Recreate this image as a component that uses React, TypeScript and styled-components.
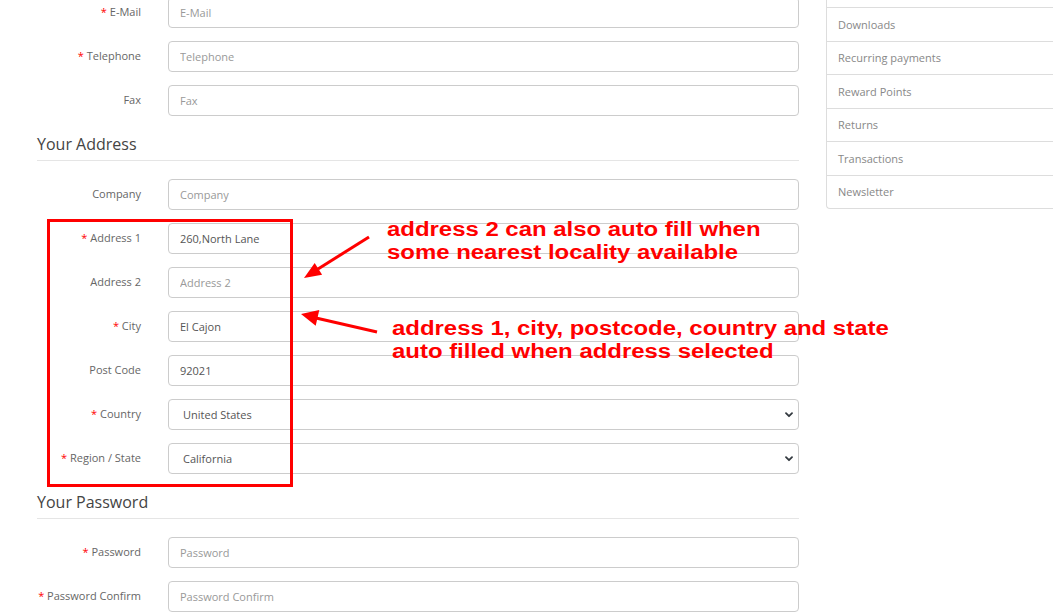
import React from "react";
import styled, { createGlobalStyle } from "styled-components";

const GlobalStyle = createGlobalStyle`
  html, body {
    margin: 0;
    padding: 0;
    overflow: hidden;
    background: #fff;
  }
  body {
    font-family: "Open Sans", "Noto Sans", sans-serif;
    color: #666;
  }
  * { box-sizing: border-box; }
`;

const Page = styled.div`
  position: relative;
  display: flex;
  align-items: flex-start;
  gap: 27px;
  padding-left: 37px;
  width: 1053px;
  height: 613px;
  overflow: hidden;
`;

const Main = styled.div`
  flex: 0 0 762px;
  margin-top: -3px;
`;

const Legend = styled.div`
  font-size: 16px;
  line-height: 24px;
  color: #444;
  padding: 3px 0 4px;
  border-bottom: 1px solid #e5e5e5;
  margin-bottom: 18px;
`;

const Row = styled.div`
  display: grid;
  grid-template-columns: 104px 1fr;
  column-gap: 27px;
  align-items: center;
  margin-bottom: 13px;
`;

const Label = styled.label<{ $required?: boolean }>`
  text-align: right;
  font-size: 11px;
  line-height: 16px;
  padding-bottom: 2px;
  color: #666;
  white-space: nowrap;
  &::before {
    content: ${(p) => (p.$required ? '"* "' : '""')};
    color: #f00;
  }
`;

const Input = styled.input`
  display: block;
  width: 100%;
  height: 31px;
  border: 1px solid #ccc;
  border-radius: 4px;
  padding: 0 11px;
  font-family: "Open Sans", "Noto Sans", sans-serif;
  font-size: 11px;
  color: #555;
  background: #fff;
  outline: none;
  &::placeholder {
    color: #999;
  }
`;

const SelectWrap = styled.div`
  position: relative;
`;

const Select = styled.select`
  display: block;
  width: 100%;
  height: 31px;
  border: 1px solid #ccc;
  border-radius: 4px;
  padding: 0 14px;
  font-family: "Open Sans", "Noto Sans", sans-serif;
  font-size: 11px;
  color: #555;
  background: #fff;
  appearance: none;
  -webkit-appearance: none;
  outline: none;
`;

const Chevron = styled.svg`
  position: absolute;
  right: 6px;
  top: 50%;
  margin-top: -3px;
  width: 8px;
  height: 6px;
  pointer-events: none;
`;

const Aside = styled.aside`
  flex: 0 0 240px;
`;

const List = styled.div`
  padding-top: 7px;
  border-left: 1px solid #ddd;
  border-bottom: 1px solid #ddd;
  border-bottom-left-radius: 4px;
`;

const Item = styled.div`
  display: flex;
  align-items: center;
  height: 33.5px;
  padding-left: 11px;
  border-top: 1px solid #ddd;
  font-size: 11px;
  color: #888;
`;

const Overlay = styled.div`
  position: absolute;
  inset: 0;
  pointer-events: none;
`;

const RedBox = styled.div`
  position: absolute;
  left: 47px;
  top: 219px;
  width: 246px;
  height: 268px;
  border: 3px solid #f00;
`;

const Arrows = styled.svg`
  position: absolute;
  left: 0;
  top: 0;
  width: 1053px;
  height: 613px;
`;

const Note = styled.div<{ $x: number; $y: number }>`
  position: absolute;
  left: ${(p) => p.$x}px;
  top: ${(p) => p.$y}px;
  font-family: "Liberation Sans", Arial, sans-serif;
  font-weight: bold;
  font-size: 20px;
  line-height: 23px;
  color: #f00;
  white-space: nowrap;
  transform-origin: 0 0;
  transform: scaleX(1.196);
`;

type Field = { label: string; placeholder: string; required?: boolean; value?: string };

const FieldRow = ({ label, placeholder, required, value }: Field) => (
  <Row>
    <Label $required={required}>{label}</Label>
    <Input placeholder={placeholder} defaultValue={value} />
  </Row>
);

const SelectRow = ({ label, value }: { label: string; value: string }) => (
  <Row>
    <Label $required>{label}</Label>
    <SelectWrap>
      <Select defaultValue={value}>
        <option>{value}</option>
      </Select>
      <Chevron viewBox="0 0 8 6">
        <path d="M1 1.2 L4 4.2 L7 1.2" fill="none" stroke="#343a40" strokeWidth="1.8" strokeLinecap="round" strokeLinejoin="round" />
      </Chevron>
    </SelectWrap>
  </Row>
);

const sideItems = [
  "Downloads",
  "Recurring payments",
  "Reward Points",
  "Returns",
  "Transactions",
  "Newsletter",
];

export default function App() {
  return (
    <>
      <GlobalStyle />
      <Page>
        <Main>
          <FieldRow label="E-Mail" placeholder="E-Mail" required />
          <FieldRow label="Telephone" placeholder="Telephone" required />
          <FieldRow label="Fax" placeholder="Fax" />
          <Legend>Your Address</Legend>
          <FieldRow label="Company" placeholder="Company" />
          <FieldRow label="Address 1" placeholder="Address 1" required value="260,North Lane" />
          <FieldRow label="Address 2" placeholder="Address 2" />
          <FieldRow label="City" placeholder="City" required value="El Cajon" />
          <FieldRow label="Post Code" placeholder="Post Code" value="92021" />
          <SelectRow label="Country" value="United States" />
          <SelectRow label="Region / State" value="California" />
          <Legend>Your Password</Legend>
          <FieldRow label="Password" placeholder="Password" required />
          <FieldRow label="Password Confirm" placeholder="Password Confirm" required />
        </Main>
        <Aside>
          <List>
            {sideItems.map((t) => (
              <Item key={t}>{t}</Item>
            ))}
          </List>
        </Aside>
        <Overlay>
          <RedBox />
          <Arrows viewBox="0 0 1053 613">
            <line x1="369" y1="237" x2="318" y2="269" stroke="#f00" strokeWidth="3" />
            <polygon points="304,278 314.7,263 322.1,274.8" fill="#f00" />
            <line x1="377" y1="332" x2="316" y2="318" stroke="#f00" strokeWidth="3" />
            <polygon points="301,314 319.3,310.1 315.7,325.7" fill="#f00" />
          </Arrows>
          <Note $x={387} $y={217.5}>
            address 2 can also auto fill when
            <br />
            some nearest locality available
          </Note>
          <Note $x={391.5} $y={316.5}>
            address 1, city, postcode, country and state
            <br />
            auto filled when address selected
          </Note>
        </Overlay>
      </Page>
    </>
  );
}
